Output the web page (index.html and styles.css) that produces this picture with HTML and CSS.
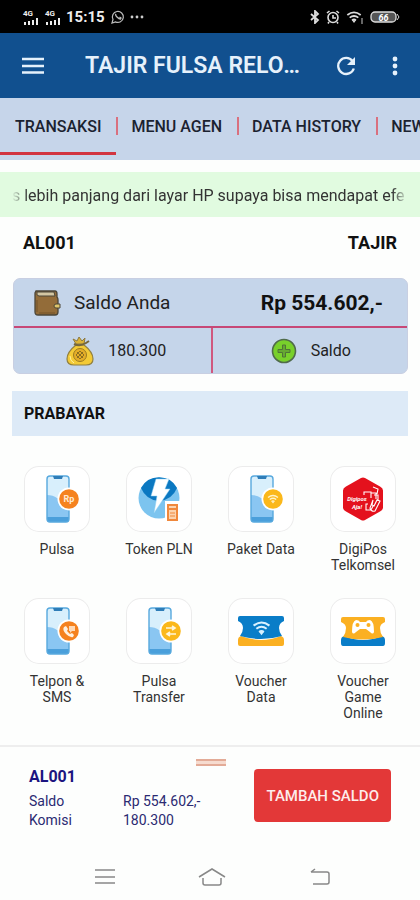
FILE: index.html
```html
<!DOCTYPE html>
<html lang="id">
<head>
<meta charset="utf-8">
<meta name="viewport" content="width=device-width, initial-scale=1">
<title>TAJIR FULSA RELOAD</title>
<link rel="stylesheet" href="styles.css">
</head>
<body>
<svg class="defs" aria-hidden="true">
  <defs>
    <symbol id="phone" viewBox="0 0 24 48">
      <rect x="1" y="1" width="22" height="46" rx="3" fill="#d8effc"/>
      <path d="M1 20q6 0 10 3t12 2v19q0 3-3 3H4q-3 0-3-3z" fill="#8ac6f2"/>
      <path d="M1 42h22v2q0 3-3 3H4q-3 0-3-3z" fill="#4a9fdb"/>
      <rect x="1" y="1" width="22" height="46" rx="3" fill="none" stroke="#58a9de" stroke-width="1.4"/>
      <path d="M7 1h10l-1 3H8z" fill="#2f7db8"/>
    </symbol>
    <symbol id="wifi" viewBox="0 0 24 20">
      <g fill="none" stroke="currentColor" stroke-width="2.6"><path d="M2 7q10-8 20 0M5.500 11q6.500-5 13 0M9 15q3-2.500 6 0"/></g>
      <path d="M9 15h6l-3 4z" fill="currentColor"/>
    </symbol>
    <symbol id="signal" viewBox="0 0 18 16">
      <path d="M1 13h2v3H1zM5 12h2v4H5zM9 11h2v5H9zM13 9h2v7h-2z" fill="#eee"/>
      <text x="0" y="7" font-size="8" font-weight="700" fill="#eee">4G</text>
    </symbol>
  </defs>
</svg>

<div class="status">
  <div class="status-group">
    <svg width="20" height="16"><use href="#signal"/></svg>
    <svg width="20" height="16"><use href="#signal"/></svg>
    <span class="clock">15:15</span>
    <svg width="14" height="14" viewBox="0 0 14 14" fill="none" stroke="#bbb"><path d="M1 13l1-3.500a5.500 5.500 0 1 1 2.500 2.400z" stroke-width="1.200"/><path d="M5 4q-1 1 1 3t3.500 2l.5-1-1.500-1" stroke-width="1.300"/></svg>
    <svg class="dots" width="16" height="4" viewBox="0 0 16 4" fill="#ccc"><circle cx="2" cy="2" r="1.400"/><circle cx="7" cy="2" r="1.400"/><circle cx="12" cy="2" r="1.400"/></svg>
  </div>
  <div class="status-group right">
    <svg width="10" height="14" viewBox="0 0 10 14" fill="none" stroke="#ddd" stroke-width="1.800"><path d="M1 4l7 6-3 3V1l3 3-7 6"/></svg>
    <svg width="14" height="14" viewBox="0 0 14 14" fill="none" stroke="#ddd" stroke-width="1.600"><circle cx="7" cy="7.500" r="5"/><path d="M7 5v3h3M1 3l2.500-2M13 3l-2.500-2M3 12l-1 1.500M11 12l1 1.500"/></svg>
    <svg width="18" height="14" viewBox="0 0 18 14" color="#ddd"><use href="#wifi" width="16" height="14"/><path d="M16 8v6" stroke="#aaa" stroke-width="1.200"/></svg>
    <svg width="30" height="14" viewBox="0 0 30 14"><rect x="1" y="2" width="25" height="10" rx="4" fill="#555" stroke="#ddd" stroke-width="1.300"/><path d="M27 4l2 3-2 3" fill="none" stroke="#ddd"/><text x="13.500" y="10.500" text-anchor="middle" font-size="9" font-weight="700" font-style="italic" fill="#fff">66</text></svg>
  </div>
</div>

<header class="appbar">
  <button class="icon-btn" aria-label="Menu"><svg width="24" height="18" viewBox="0 0 24 18" stroke="#e6f1fb" stroke-width="2.400"><path d="M1 2h22M1 9h22M1 15.500h22"/></svg></button>
  <h1>TAJIR FULSA RELOAD</h1>
  <button class="icon-btn" aria-label="Muat ulang"><svg width="20" height="20" viewBox="0 0 20 20"><path d="M16.500 5A8 8 0 1 0 17.800 12.500" fill="none" stroke="#e6f1fb" stroke-width="2.300"/><path d="M19 1v8h-8z" fill="#e6f1fb"/></svg></button>
  <button class="icon-btn more" aria-label="Lainnya"><svg width="6" height="20" viewBox="0 0 6 20" fill="#e6f1fb"><circle cx="3" cy="3" r="2.400"/><circle cx="3" cy="10" r="2.400"/><circle cx="3" cy="17" r="2.400"/></svg></button>
</header>

<nav class="tabs">
  <a href="#transaksi" class="active">TRANSAKSI</a>
  <a href="#agen">MENU AGEN</a>
  <a href="#history">DATA HISTORY</a>
  <a href="#news">NEWS</a>
</nav>

<main>
  <div class="ticker"><p>s lebih panjang dari layar HP supaya bisa mendapat efe</p></div>

  <div class="account"><span>AL001</span><span>TAJIR</span></div>

  <section class="balance">
    <div class="balance-top">
      <svg width="28" height="28" viewBox="0 0 28 28"><path d="M3 2h19q2 0 2 3v3q1 1 1 3v12q0 3-3 3H5q-3 0-3-3V4z" fill="#936c39" stroke="#4c4638" stroke-width="1.300"/><path d="M4 3h17l1 4H6Q3 7 4 3z" fill="#d3c6a2" stroke="#4c4638"/><path d="M4 11v12M6 24h16" stroke="#73522b" stroke-width="1"/><path d="M27 15h-4q-2 0-2 2t2 2h4z" fill="#dfc66c" stroke="#4c4638"/></svg>
      <span class="balance-label">Saldo Anda</span>
      <strong>Rp 554.602,-</strong>
    </div>
    <div class="balance-bottom">
      <div class="cell">
        <svg width="28" height="30" viewBox="0 0 28 30"><path d="M10 8L7 3l4 2 2-4 3 4 3-3-1 6z" fill="#ddb435" stroke="#8d793f"/><path d="M10 9q-9 7-9 14 0 6 7 6h12q7 0 7-6 0-7-9-14z" fill="#f3ca36" stroke="#92803f" stroke-width="1.200"/><path d="M8 8q6 3 12-1l3-2" fill="none" stroke="#75673c" stroke-width="2"/><circle cx="14" cy="19" r="6.500" fill="#e4ae28" stroke="#9b7a22"/><path d="M11 16l6 6M17 16l-6 6M14 15l4 4-4 4-4-4z" fill="none" stroke="#8d6e20"/><path d="M4 20q0 5 4 7" fill="none" stroke="#fff09c"/></svg>
        <span>180.300</span>
      </div>
      <div class="cell add">
        <svg width="26" height="26" viewBox="0 0 26 26"><circle cx="13" cy="13" r="11.500" fill="#78d02b" stroke="#506b4b" stroke-width="1.600"/><path d="M11.500 7h3v4.500H19v3h-4.500V19h-3v-4.500H7v-3h4.500z" fill="#66a832" stroke="#4f7436"/></svg>
        <span>Saldo</span>
      </div>
    </div>
  </section>

  <h2>PRABAYAR</h2>

  <div class="services">
    <a href="#pulsa"><span class="tile"><svg viewBox="0 0 66 66"><use href="#phone" x="22" y="9" width="24" height="48"/><circle cx="45" cy="33" r="11.500" fill="#fff"/><circle cx="45" cy="33" r="9.800" fill="#f5821f"/><text x="45" y="36" text-anchor="middle" font-size="9" font-weight="700" fill="#ffe9d2">Rp</text></svg></span>Pulsa</a>
    <a href="#pln"><span class="tile"><svg viewBox="0 0 66 66"><circle cx="33" cy="32" r="20.500" fill="#7cc4ef"/><path d="M15 22a20.500 20.500 0 0 1 36 0q-5 12-18 13-13-1-18-13z" fill="#0b78c1"/><path d="M30 13h13l-4 10h5L28 47l3-17h-6z" fill="#fff" stroke="#8ed0f5" stroke-width=".5"/><path d="M39 35h15v22H39z" fill="#fff"/><path d="M41 38h11v17H41z" fill="#f0883c"/><path d="M43 40h7v2h-7zM43 44h7v9h-7z" fill="#fbd4b0"/><path d="M44 47h5M44 50h5" stroke="#f0883c"/></svg></span>Token PLN</a>
    <a href="#paket"><span class="tile"><svg viewBox="0 0 66 66" color="#fff3c9"><use href="#phone" x="22" y="9" width="24" height="48"/><circle cx="45" cy="33" r="11.500" fill="#fff"/><circle cx="45" cy="33" r="9.800" fill="#fbb81b"/><use href="#wifi" x="39" y="28" width="12" height="10"/></svg></span>Paket Data</a>
    <a href="#digipos"><span class="tile"><svg viewBox="0 0 66 66"><path d="M31 12q2-1 4 0l15 8.500q3 1.500 3 4v17q0 2.500-3 4L35 54q-2 1-4 0l-15-8.500q-3-1.500-3-4v-17q0-2.500 3-4z" fill="#e4111d"/><g fill="none" stroke="#fff" stroke-width="1.100"><path d="M34 29v-3h7v4M41 32v-5h5v6M43 21l5 2-1 5M38 38h-2v6h5l2-4M43 34l-3 8q1 4 5 3l5-10-3-1-3 6-2-1 1-5zM44 29h4v6"/></g><text x="27" y="35" text-anchor="middle" font-size="6" font-weight="700" font-style="italic" fill="#fff">Digipos</text><text x="27" y="43" text-anchor="middle" font-size="6" font-weight="700" font-style="italic" fill="#fff">Aja!</text></svg></span>DigiPos Telkomsel</a>
    <a href="#telpon"><span class="tile"><svg viewBox="0 0 66 66"><use href="#phone" x="22" y="9" width="24" height="48"/><circle cx="45" cy="33" r="11.500" fill="#fff"/><circle cx="45" cy="33" r="9.800" fill="#f5821f"/><path d="M40 29l2-1 2 3-1 2 3 3 2-1 2 2-1 2q-3 1-7-3t-2-7z" fill="#fff0df"/><path d="M45 28h6v5h-3l-2 2v-2h-1z" fill="#ffd9b5"/></svg></span>Telpon &amp; SMS</a>
    <a href="#transfer"><span class="tile"><svg viewBox="0 0 66 66"><use href="#phone" x="22" y="9" width="24" height="48"/><circle cx="45" cy="33" r="11.500" fill="#fff"/><circle cx="45" cy="33" r="9.800" fill="#fbb81b"/><path d="M40 30h9m-3-2l3 2-3 2M50 36h-9m3-2l-3 2 3 2" fill="none" stroke="#fff6da" stroke-width="1.600"/></svg></span>Pulsa Transfer</a>
    <a href="#voucher-data"><span class="tile"><svg viewBox="0 0 66 66" color="#d9f1ff"><path d="M13 38q20 8 40 0 3 1 3 4v4q0 2-2 2H12q-2 0-2-2v-4q0-3 3-4z" fill="#fbb022"/><path d="M12 18h42q2 0 2 2v3q-5 2-5 7 0 4 3 8-21 6-42 0 3-4 3-8 0-5-5-7v-3q0-2 2-2z" fill="#0a7dc8"/><use href="#wifi" x="24" y="22" width="19" height="16"/></svg></span>Voucher Data</a>
    <a href="#voucher-game"><span class="tile"><svg viewBox="0 0 66 66"><path d="M14 38q19 8 38 0 3 1 3 4v3q0 3-2 3H13q-2 0-2-3v-3q0-3 3-4z" fill="#0a7dc8"/><path d="M13 19h40q2 0 2 2v3q-5 2-5 6 0 5 3 9-20 5-40 0 3-4 3-9 0-4-5-6v-3q0-2 2-2z" fill="#fbb022"/><path d="M26 22q-4 1-4 12 1 3 4 0l4-3h6l4 3q3 3 4 0 0-11-4-12-3 0-4 2h-6q-1-2-4-2z" fill="#fff"/><circle cx="27.500" cy="27" r="2" fill="#fbb022"/><circle cx="38.500" cy="27" r="2" fill="#fbb022"/></svg></span>Voucher Game Online</a>
  </div>
</main>

<footer class="sheet">
  <span class="handle"></span>
  <div class="sheet-info">
    <strong>AL001</strong>
    <dl><dt>Saldo</dt><dd>Rp 554.602,-</dd><dt>Komisi</dt><dd>180.300</dd></dl>
  </div>
  <button class="topup">TAMBAH SALDO</button>
</footer>

<div class="sysnav">
  <button class="icon-btn" aria-label="Aplikasi terbaru"><svg width="20" height="18" viewBox="0 0 20 18" stroke="#888" stroke-width="1.500"><path d="M0 2h20M0 9h20M0 15h20"/></svg></button>
  <button class="icon-btn" aria-label="Beranda"><svg width="28" height="20" viewBox="0 0 28 20" fill="none" stroke="#888" stroke-width="1.500"><path d="M1 10L14 2l13 8M5 11v5q0 2 2 2h14q2 0 2-2v-5"/></svg></button>
  <button class="icon-btn" aria-label="Kembali"><svg width="22" height="18" viewBox="0 0 22 18" fill="none" stroke="#888" stroke-width="1.500"><path d="M4 16h14q2 0 2-2V6q0-2-2-2H2M6 1L2 4"/></svg></button>
</div>
</body>
</html>
```
FILE: styles.css
```css
* { box-sizing: border-box; }

body {
  margin: 0;
  min-height: 100vh;
  display: flex;
  flex-direction: column;
  background: #fdfefd;
  color: #222;
  font-family: Roboto, "Liberation Sans", sans-serif;
  overflow-x: hidden;
}

.defs { position: absolute; width: 0; height: 0; }
svg { display: block; flex: none; }
a { color: inherit; text-decoration: none; }
button { font-family: inherit; cursor: pointer; }

.icon-btn {
  display: flex;
  padding: 0;
  border: 0;
  background: none;
}

.status {
  display: flex;
  justify-content: space-between;
  align-items: center;
  height: 33px;
  padding: 0 20px 0 22px;
  background: #000;
}
.status-group { display: flex; align-items: center; gap: 2px; }
.status-group.right { gap: 6px; }
.clock { margin-right: 4px; color: #eee; font-size: 15px; font-weight: 700; }
.dots { margin-left: 3px; }

.appbar {
  display: flex;
  align-items: center;
  height: 65px;
  padding: 0 22px 0 21px;
  background: #11508f;
}
h1 {
  flex: 1;
  margin: 0 34px 0 40px;
  overflow: hidden;
  color: #e6f1fb;
  font-size: 23px;
  font-weight: 600;
  line-height: 32px;
  text-overflow: ellipsis;
  white-space: nowrap;
}
.more { margin-left: 36px; }

.tabs {
  display: flex;
  height: 62px;
  overflow: hidden;
  background: #c6d5ea;
  color: #1b2230;
  font-size: 16px;
  font-weight: 500;
}
.tabs a {
  position: relative;
  flex: none;
  height: 57px;
  padding: 0 15px;
  line-height: 57px;
}
.tabs a + a::before {
  content: "";
  position: absolute;
  left: 0;
  top: 19px;
  width: 2px;
  height: 18px;
  background: #d9707f;
}
.tabs .active { border-bottom: 3px solid #d23440; }

main { flex: 1; padding-top: 12px; }

.ticker {
  height: 45px;
  padding: 0 12px;
  background: #e1fbe0;
}
.ticker p {
  margin: 0;
  overflow: hidden;
  color: #333;
  font-size: 16px;
  line-height: 47px;
  white-space: nowrap;
  mask-image: linear-gradient(90deg, transparent, #000 16px, #000 calc(100% - 16px), transparent);
}

.account {
  display: flex;
  justify-content: space-between;
  padding: 14px 23px 23px;
  color: #111;
  font-size: 18px;
  font-weight: 700;
  line-height: 24px;
}

.balance {
  margin: 0 12px 17px 13px;
  border-radius: 7px;
  background: #c5d5ea;
  border: 1px solid #c8cfe2;
}
.balance-top {
  display: flex;
  align-items: center;
  height: 49px;
  padding: 0 24px 0 19px;
  border-bottom: 2px solid #c74877;
}
.balance-label { margin-left: 13px; font-size: 19px; }
.balance-top strong { margin-left: auto; color: #111; font-size: 21px; }
.balance-bottom { display: grid; grid-template-columns: 1fr 1fr; height: 45px; }
.cell {
  display: flex;
  align-items: center;
  justify-content: center;
  gap: 14px;
  padding-left: 8px;
  font-size: 16px;
}
.cell.add { padding-left: 2px; border-left: 2px solid #d0587f; }

h2 {
  margin: 0 12px 30px;
  padding: 0 12px;
  background: #ddeaf7;
  color: #111;
  font-size: 16px;
  font-weight: 700;
  line-height: 45px;
}

.services {
  display: grid;
  grid-template-columns: repeat(4, 1fr);
  row-gap: 25px;
  padding: 0 6px 24px;
}
.services a {
  display: flex;
  flex-direction: column;
  align-items: center;
  padding: 0 15px;
  color: #333;
  font-size: 14px;
  line-height: 16px;
  text-align: center;
}
.tile {
  width: 66px;
  height: 66px;
  margin-bottom: 9px;
  border-radius: 15px;
  background: #fff;
  box-shadow: inset 0 0 0 1px #ececec;
}

.sheet {
  position: relative;
  display: flex;
  justify-content: space-between;
  align-items: flex-start;
  padding: 20px 29px 25px;
  border-top: 2px solid #eee;
}
.handle {
  position: absolute;
  left: 50%;
  top: 12px;
  width: 30px;
  height: 7px;
  margin-left: -14px;
  border: solid #e3ab97;
  border-width: 2px 0;
  background: #f6dbcf;
}
.sheet-info { color: #2b2a72; font-size: 14px; }
.sheet-info strong { display: block; color: #1b1480; font-size: 16px; line-height: 20px; }
dl {
  display: grid;
  grid-template-columns: 94px auto;
  margin: 5px 0 0;
  line-height: 19px;
}
dd { margin: 0; }
.topup {
  height: 53px;
  margin-top: 2px;
  padding: 0 12px;
  border: 0;
  border-radius: 4px;
  background: #e33838;
  color: #fdeceb;
  font-size: 15px;
  font-weight: 500;
}

.sysnav {
  display: flex;
  justify-content: center;
  align-items: center;
  gap: 83px;
  height: 48px;
  padding: 0 0 4px 6px;
}
```
